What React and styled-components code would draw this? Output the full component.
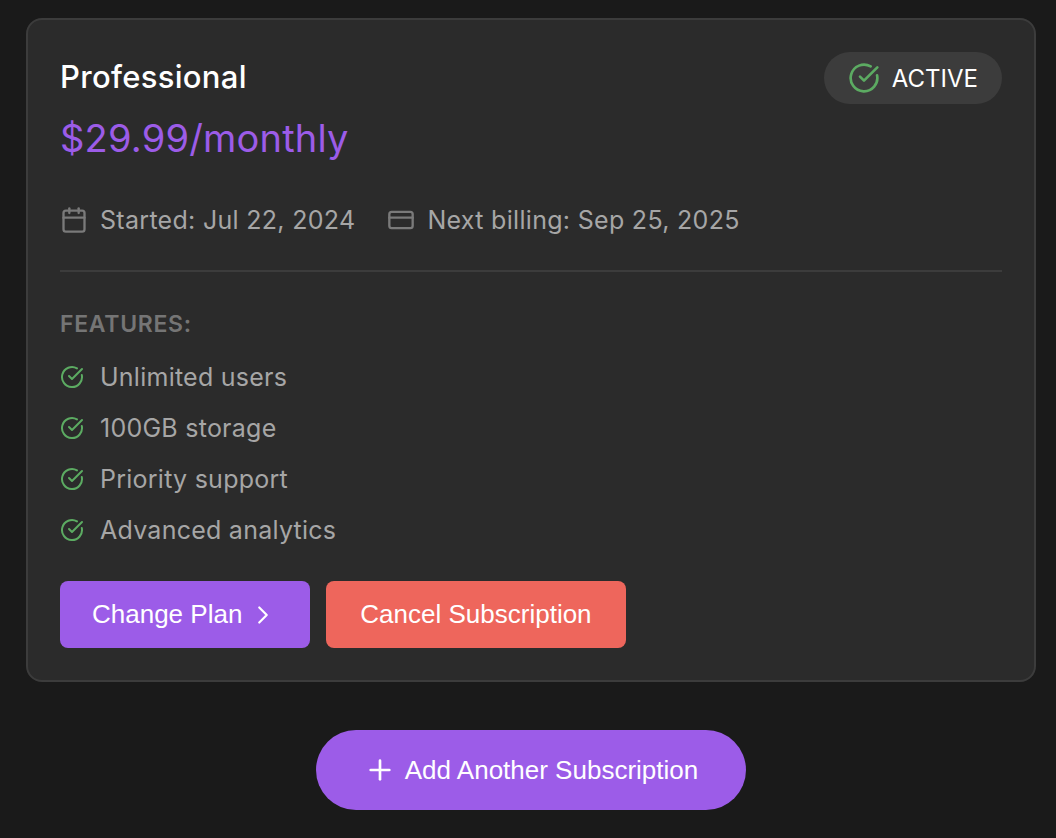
import React from "react";
import styled, { createGlobalStyle } from "styled-components";
import { Calendar, CreditCard, CircleCheckBig, ChevronRight, Plus } from "lucide-react";

const FEATURES = [
  "Unlimited users",
  "100GB storage",
  "Priority support",
  "Advanced analytics",
];

export default function App() {
  return (
    <>
      <GlobalStyle />
      <Page>
        <Card>
          <Header>
            <div>
              <PlanName>Professional</PlanName>
              <Price>$29.99/monthly</Price>
            </div>
            <StatusBadge>
              <CircleCheckBig size={32} strokeWidth={2} color="#5cab62" />
              ACTIVE
            </StatusBadge>
          </Header>

          <MetaRow>
            <MetaItem>
              <Calendar size={28} strokeWidth={2} />
              Started: Jul 22, 2024
            </MetaItem>
            <MetaItem>
              <CreditCard size={28} strokeWidth={2} />
              Next billing: Sep 25, 2025
            </MetaItem>
          </MetaRow>

          <Divider />

          <FeaturesLabel>FEATURES:</FeaturesLabel>
          <FeatureList>
            {FEATURES.map((feature) => (
              <FeatureItem key={feature}>
                <CircleCheckBig size={24} strokeWidth={2} color="#5cab62" />
                {feature}
              </FeatureItem>
            ))}
          </FeatureList>

          <Actions>
            <ActionButton type="button" $bg="#9c5ce8" $pad={32}>
              Change Plan
              <ChevronRight size={30} strokeWidth={1.75} />
            </ActionButton>
            <ActionButton type="button" $bg="#ee665c" $pad={34}>
              Cancel Subscription
            </ActionButton>
          </Actions>
        </Card>

        <AddButton type="button">
          <Plus size={32} strokeWidth={2} />
          Add Another Subscription
        </AddButton>
      </Page>
    </>
  );
}

const GlobalStyle = createGlobalStyle`
  html, body {
    margin: 0;
    height: 100%;
    background: #1a1a1a;
  }
`;

const Page = styled.div`
  display: flex;
  flex-direction: column;
  align-items: center;
  padding: 18px 20px 28px 26px;
  font-family: "Inter", sans-serif;
`;

const Card = styled.div`
  box-sizing: border-box;
  width: 100%;
  height: 664px;
  padding: 32px;
  background: #2b2b2b;
  border: 2px solid #3c3c3c;
  border-radius: 16px;
`;

const Header = styled.div`
  display: flex;
  justify-content: space-between;
  align-items: flex-start;
`;

const PlanName = styled.h2`
  margin: 0;
  color: #fff;
  font-size: 31px;
  font-weight: 500;
  letter-spacing: 0.3px;
  line-height: 50px;
`;

const Price = styled.div`
  margin-top: 13px;
  color: #9c5ce8;
  font-size: 38px;
  font-weight: 400;
  letter-spacing: 0.2px;
  line-height: 46px;
`;

const StatusBadge = styled.div`
  display: flex;
  align-items: center;
  gap: 12px;
  height: 52px;
  padding: 0 24px;
  border-radius: 26px;
  background: #3c3c3c;
  color: #fff;
  font-size: 24px;
  font-weight: 400;
`;

const MetaRow = styled.div`
  display: flex;
  gap: 32px;
  margin-top: 40px;
`;

const MetaItem = styled.div`
  display: flex;
  align-items: center;
  gap: 12px;
  color: #a6a6a6;
  font-size: 25px;
  letter-spacing: 0.3px;
  line-height: 38px;

  svg {
    color: #7a7a7a;
  }
`;

const Divider = styled.hr`
  margin: 31px 0 0;
  border: none;
  border-top: 2px solid #3c3c3c;
`;

const FeaturesLabel = styled.div`
  margin-top: 36px;
  color: #757575;
  font-size: 23px;
  font-weight: 600;
  letter-spacing: 0.7px;
  line-height: 32px;
`;

const FeatureList = styled.ul`
  display: flex;
  flex-direction: column;
  gap: 13px;
  margin: 18px 0 0;
  padding: 0;
  list-style: none;
`;

const FeatureItem = styled.li`
  display: flex;
  align-items: center;
  gap: 16px;
  color: #a6a6a6;
  font-size: 25px;
  letter-spacing: 0.25px;
  line-height: 38px;
`;

const Actions = styled.div`
  display: flex;
  gap: 16px;
  margin-top: 32px;
`;

const ActionButton = styled.button`
  display: flex;
  align-items: center;
  gap: 6px;
  height: 67px;
  padding: 0 ${(p) => p.$pad}px;
  border: none;
  border-radius: 8px;
  background: ${(p) => p.$bg};
  color: #fff;
  font-family: "Liberation Sans", Arial, sans-serif;
  font-size: 26px;
`;

const AddButton = styled.button`
  display: flex;
  align-items: center;
  gap: 9px;
  height: 80px;
  margin-top: 48px;
  padding: 0 48px;
  border: none;
  border-radius: 40px;
  background: #9c5ce8;
  color: #fff;
  font-family: "Liberation Sans", Arial, sans-serif;
  font-size: 26px;
`;
